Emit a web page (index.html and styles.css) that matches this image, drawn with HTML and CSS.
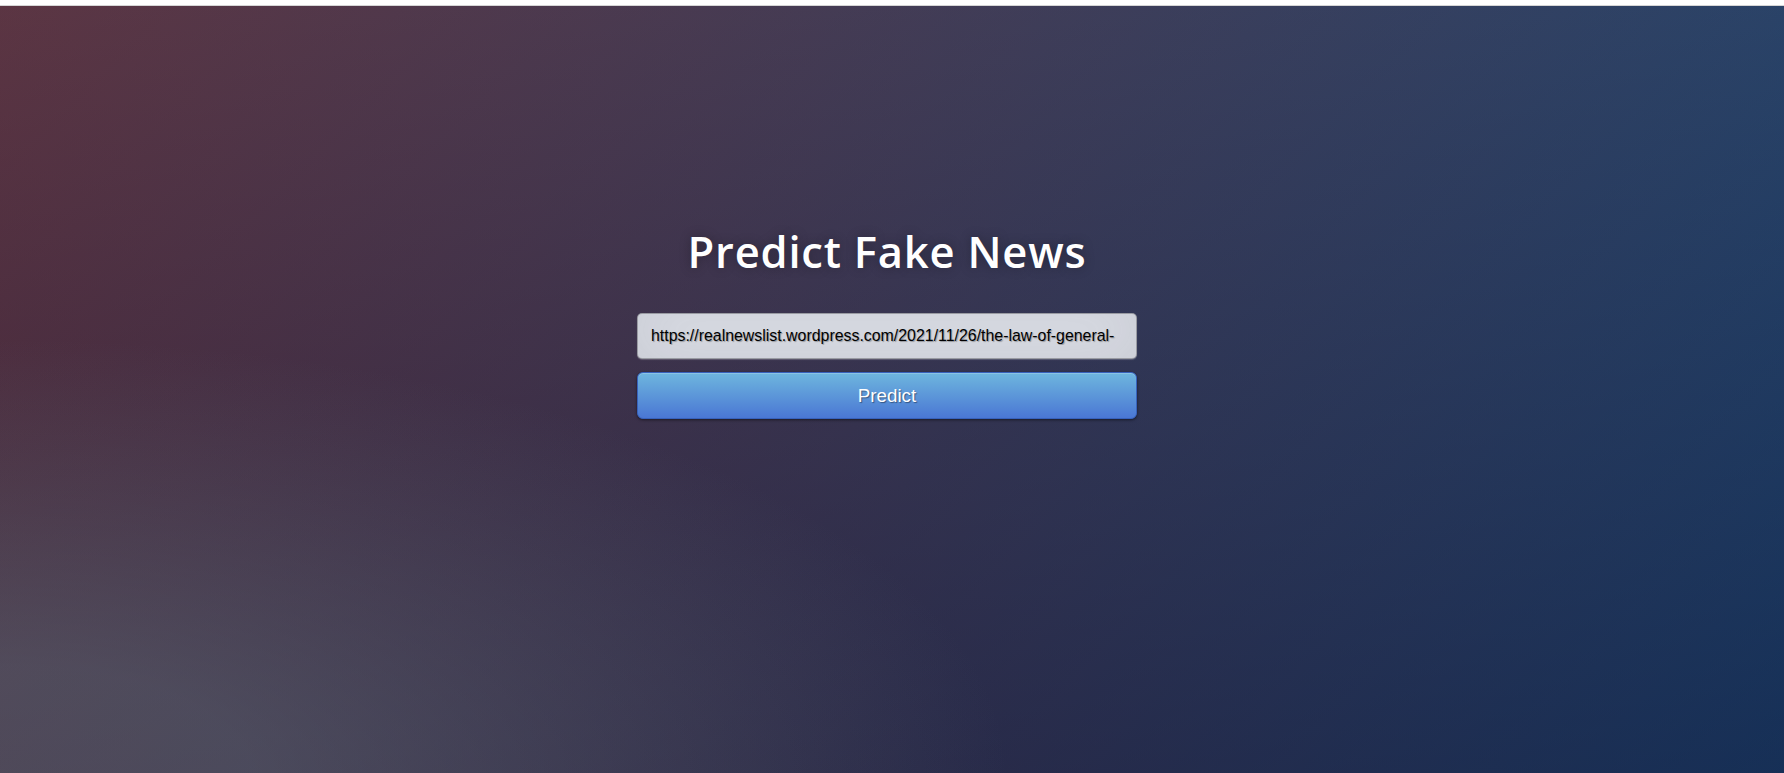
FILE: index.html
```html
<!DOCTYPE html>
<html lang="en">
<head>
<meta charset="utf-8">
<title>Predict Fake News</title>
<link rel="stylesheet" href="styles.css">
</head>
<body>
<div class="topbar"></div>
<main class="stage">
  <div class="panel">
    <h1 class="title">Predict Fake News</h1>
    <form class="form">
      <input class="url-input" type="text" value="https://realnewslist.wordpress.com/2021/11/26/the-law-of-general-">
      <button class="btn" type="button">Predict</button>
    </form>
  </div>
</main>
</body>
</html>
```
FILE: styles.css
```css
html, body {
  height: 100%;
}
body {
  margin: 0;
  display: flex;
  flex-direction: column;
  background: #fff;
  font-family: "Open Sans", "Liberation Sans", sans-serif;
  overflow: hidden;
}
.topbar {
  height: 5px;
  background: #fff;
  border-bottom: 1px solid #d6d6d6;
  flex: none;
}
.stage {
  flex: 1;
  display: flex;
  justify-content: center;
  align-items: flex-start;
  padding: 217px 10px 0 0;
  background:
    radial-gradient(ellipse farthest-corner at 0% 100%, rgba(104,128,138,.4) 10%, rgba(138,114,76,0) 40%),
    linear-gradient(to bottom, rgba(57,173,219,.25) 0%, rgba(42,60,87,.4) 100%),
    linear-gradient(135deg, #670d10 0%, #092756 100%);
}
.panel {
  width: 500px;
  display: flex;
  flex-direction: column;
}
.title {
  margin: 0 0 32px;
  font-family: "Open Sans", sans-serif;
  font-weight: 600;
  font-size: 43.5px;
  line-height: 58px;
  letter-spacing: 0.8px;
  color: #fff;
  text-align: center;
  white-space: nowrap;
  text-shadow: 0 0 12px rgba(0,0,0,0.3);
}
.form {
  display: flex;
  flex-direction: column;
  gap: 13px;
}
.url-input {
  box-sizing: border-box;
  width: 100%;
  height: 46px;
  margin: 0;
  padding: 0 13px;
  font-family: "Liberation Sans", Arial, sans-serif;
  font-size: 15.9px;
  color: #000;
  background: #dcdfe8;
  border: 1px solid rgba(0,0,0,0.3);
  border-radius: 5px;
  outline: none;
  text-shadow: 1px 1px 1px rgba(0,0,0,0.3);
  box-shadow: inset 0 -6px 56px rgba(100,100,100,0.15), 0 1px 1px rgba(255,255,255,0.2);
}
.btn {
  box-sizing: border-box;
  width: 100%;
  height: 47px;
  margin: 0;
  padding: 0 17px;
  font-family: "Liberation Sans", Arial, sans-serif;
  font-size: 18.75px;
  color: #fff;
  background-color: #4a77d4;
  background-image: linear-gradient(to bottom, #6eb6de, #4a77d4);
  border: 1px solid #3762bc;
  border-radius: 6px;
  text-shadow: 1px 1px 1px rgba(0,0,0,0.4);
  box-shadow: inset 0 1px 0 rgba(255,255,255,0.2), 0 1px 3px rgba(0,0,0,0.5);
  cursor: pointer;
}
```
